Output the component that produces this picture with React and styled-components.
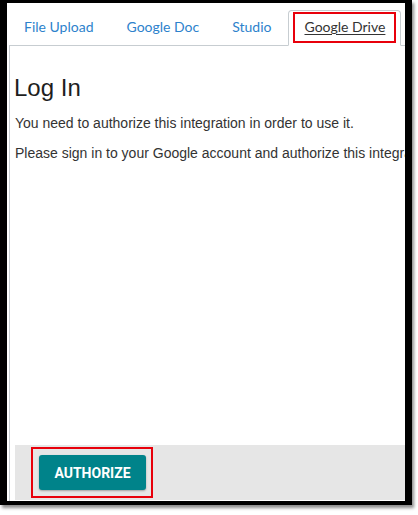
import React from "react";
import styled, { createGlobalStyle } from "styled-components";

const Global = createGlobalStyle`
  html, body { margin: 0; padding: 0; background: #ffffff; }
  #root { width: 418px; height: 515px; }
`;

const Frame = styled.div`
  box-sizing: border-box;
  width: 412px;
  height: 505px;
  border-style: solid;
  border-color: #000;
  border-width: 3px 7px 4px 7px;
  box-shadow: 2px 3px 3px rgba(0, 0, 0, 0.45);
  background: #fff;
  overflow: hidden;
  display: flex;
  flex-direction: column;
  padding-left: 2px;
`;

const TabList = styled.div`
  box-sizing: border-box;
  height: 43px;
  flex: none;
  display: flex;
  align-items: flex-end;
  gap: 1px;
  border-bottom: 1px solid #c7cdd1;
`;

const Tab = styled.div`
  box-sizing: border-box;
  flex: none;
  margin-bottom: -1px;
  padding: 1px 4px 2px;
  border: 1px solid ${(p) => (p.$active ? "#c7cdd1" : "transparent")};
  border-bottom: 1px solid ${(p) => (p.$active ? "#ffffff" : "transparent")};
  border-radius: 4px 4px 0 0;
  background: ${(p) => (p.$active ? "#ffffff" : "transparent")};
  &:first-child { margin-left: -1px; }
`;

const TabLabel = styled.span`
  display: block;
  box-sizing: border-box;
  height: 31px;
  padding: 1px 9px 2px;
  border: 2px solid ${(p) => (p.$marked ? "#e8000b" : "transparent")};
  font-family: Lato, "Liberation Sans", sans-serif;
  font-size: 14px;
  line-height: 24px;
  white-space: nowrap;
  color: ${(p) => (p.$active ? "#333333" : "#2d82cc")};
  text-decoration: ${(p) => (p.$active ? "underline" : "none")};
  text-underline-offset: 2px;
`;

const Panel = styled.div`
  flex: 1;
  display: flex;
  flex-direction: column;
  border-left: 1px solid #c7cdd1;
  padding-bottom: 1px;
  min-height: 0;
`;

const Content = styled.div`
  padding-left: 5px;
  font-family: "Liberation Sans", Arial, sans-serif;
`;

const Title = styled.h1`
  margin: 27px 0 0 -1px;
  font-size: 24px;
  font-weight: 400;
  line-height: 29px;
  color: #1e1e1e;
`;

const Para = styled.p`
  margin: ${(p) => p.$top}px 0 0;
  font-size: 14px;
  line-height: 20px;
  color: #333;
  white-space: nowrap;
`;

const Footer = styled.div`
  margin-top: auto;
  margin-left: 5px;
  height: 55px;
  box-sizing: border-box;
  padding: 2px 0 0 16px;
  background: #e6e6e6;
  display: flex;
  align-items: flex-start;
`;

const Highlight = styled.div`
  border: 2px solid #e8000b;
  padding: 6px 5px 6px 6px;
`;

const Button = styled.button`
  box-sizing: border-box;
  width: 107px;
  height: 35px;
  border: none;
  border-radius: 3px;
  background: #00838a;
  color: #fff;
  font-family: Roboto, "Liberation Sans", sans-serif;
  font-weight: 700;
  font-size: 14px;
  padding: 0;
  box-shadow: 0 1px 2px rgba(0, 0, 0, 0.3);
  cursor: pointer;
`;

export default function App() {
  const tabs = ["File Upload", "Google Doc", "Studio", "Google Drive"];
  return (
    <>
      <Global />
      <Frame>
        <TabList>
          {tabs.map((t, i) => {
            const active = i === tabs.length - 1;
            return (
              <Tab key={t} $active={active}>
                <TabLabel $active={active} $marked={active}>
                  {t}
                </TabLabel>
              </Tab>
            );
          })}
        </TabList>
        <Panel>
          <Content>
            <Title>Log In</Title>
            <Para $top={11}>You need to authorize this integration in order to use it.</Para>
            <Para $top={10}>
              Please sign in to your Google account and authorize this integration to access your files.
            </Para>
          </Content>
          <Footer>
            <Highlight>
              <Button>AUTHORIZE</Button>
            </Highlight>
          </Footer>
        </Panel>
      </Frame>
    </>
  );
}
